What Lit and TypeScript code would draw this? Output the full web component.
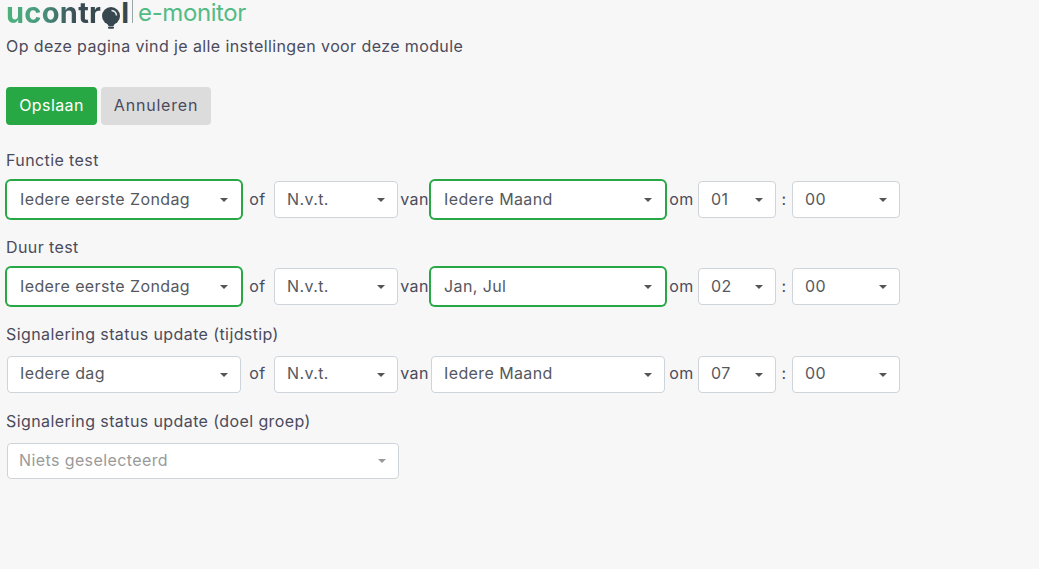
import { LitElement, html, css } from "lit";
import { customElement } from "lit/decorators.js";

type Row = { label: string; a: string; aHi?: boolean; b: string; c: string; cHi?: boolean; h: string; m: string };

const rows: Row[] = [
  { label: "Functie test", a: "Iedere eerste Zondag", aHi: true, b: "N.v.t.", c: "Iedere Maand", cHi: true, h: "01", m: "00" },
  { label: "Duur test", a: "Iedere eerste Zondag", aHi: true, b: "N.v.t.", c: "Jan, Jul", cHi: true, h: "02", m: "00" },
  { label: "Signalering status update (tijdstip)", a: "Iedere dag", b: "N.v.t.", c: "Iedere Maand", h: "07", m: "00" },
];

@customElement("app-root")
export class AppRoot extends LitElement {
  static styles = css`
    :host {
      display: block;
      min-height: 569px;
      background: #f7f7f7;
      color: #4b4b5c;
      font-family: "Inter", "Liberation Sans", sans-serif;
      font-size: 16px;
      letter-spacing: 0.4px;
      box-sizing: border-box;
      padding: 0 6px;
      overflow: hidden;
    }
    .logo { display: flex; align-items: flex-start; height: 26px; letter-spacing: 0; }
    .word {
      font-weight: 700; font-size: 29px; line-height: 26px; letter-spacing: 0.3px;
      background: linear-gradient(90deg, #4cb47c 0%, #4a9a80 35%, #3a4a55 75%, #37474f 100%);
      -webkit-background-clip: text; background-clip: text; color: transparent;
    }
    .bulb { display: block; margin: 7px 0 0 0; flex: none; }
    .ell { font-weight: 700; font-size: 29px; line-height: 26px; color: #37474f; }
    .sep { width: 1px; height: 23px; background: #9aa5a8; margin: 0 5px 0 3px; }
    .module { font-size: 24px; line-height: 26px; color: #55bb85; font-weight: 400; letter-spacing: -0.4px; }
    .intro { margin: 10px 0 0; line-height: 20px; height: 22px; }
    .actions { display: flex; gap: 4px; margin-top: 29px; }
    .btn {
      height: 38px; box-sizing: border-box; padding-bottom: 2px; border: 0; border-radius: 4px; font: inherit; font-size: 16px;
      display: flex; align-items: center; justify-content: center;
    }
    .save { width: 91px; background: #28a745; color: #fff; }
    .cancel { width: 110px; background: #dcdcdc; color: #4b4b5c; letter-spacing: 0.8px; }
    .label { line-height: 20px; height: 22px; }
    .l0 { margin-top: 25px; }
    .l1, .l2 { margin-top: 19px; }
    .l3 { margin-top: 18px; }
    .line {
      display: grid;
      grid-template-columns: 234px 33px 124px 33px 234px 33px 78px 16px 108px;
      margin: 9px 0 0 1px;
      height: 37px;
      align-items: center;
      width: max-content;
    }
    .line.r2 { margin-top: 10px; }
    .gap { text-align: center; white-space: nowrap; padding-bottom: 2px; }
    .sel {
      height: 37px; box-sizing: border-box; background: #fff;
      border: 1px solid #ced4da; border-radius: 4px;
      display: flex; align-items: center; justify-content: space-between;
      padding: 0 12px; color: #55595f; white-space: nowrap;
    }
    .sel span { padding-bottom: 2px; }
    .r2 .sel span, .r2 .gap { padding-bottom: 3px; }
    .hi { border: 0; box-shadow: 0 0 0 2px #28a745; padding: 0 13px; }
    .caret { width: 0; height: 0; border-left: 4px solid transparent; border-right: 4px solid transparent; border-top: 4px solid #555; flex: none; }
    .wide { width: 392px; margin: 10px 0 0 1px; height: 36px; color: #9a9a9a; padding-left: 11px; }
    .wide .caret { border-top-color: #999; }
  `;

  private sel(text: string, hi = false) {
    return html`<div class="sel ${hi ? "hi" : ""}"><span>${text}</span><i class="caret"></i></div>`;
  }

  render() {
    return html`
      <div class="logo">
        <span class="word">ucontr</span>
        <svg class="bulb" width="20" height="22" viewBox="0 0 20 22" aria-hidden="true">
          <circle cx="10" cy="9" r="9" fill="#37474f" />
          <path d="M6 16h8l-1.5 3h-5z" fill="#37474f" />
          <rect x="7" y="19.4" width="6" height="2.4" rx="1.1" fill="#37474f" />
          <path d="M10.5 3.5a5.5 5.5 0 0 1 5 5" stroke="#e4e8e9" stroke-width="1.6" fill="none" />
        </svg>
        <span class="ell">l</span>
        <span class="sep"></span>
        <span class="module">e-monitor</span>
      </div>
      <p class="intro">Op deze pagina vind je alle instellingen voor deze module</p>
      <div class="actions">
        <div class="btn save">Opslaan</div>
        <div class="btn cancel">Annuleren</div>
      </div>
      ${rows.map(
        (r, i) => html`
          <div class="label l${i}">${r.label}</div>
          <div class="line r${i}">
            ${this.sel(r.a, r.aHi)}
            <span class="gap">of</span>
            ${this.sel(r.b)}
            <span class="gap">van</span>
            ${this.sel(r.c, r.cHi)}
            <span class="gap">om</span>
            ${this.sel(r.h)}
            <span class="gap">:</span>
            ${this.sel(r.m)}
          </div>
        `
      )}
      <div class="label l3">Signalering status update (doel groep)</div>
      <div class="sel wide"><span>Niets geselecteerd</span><i class="caret"></i></div>
    `;
  }
}
